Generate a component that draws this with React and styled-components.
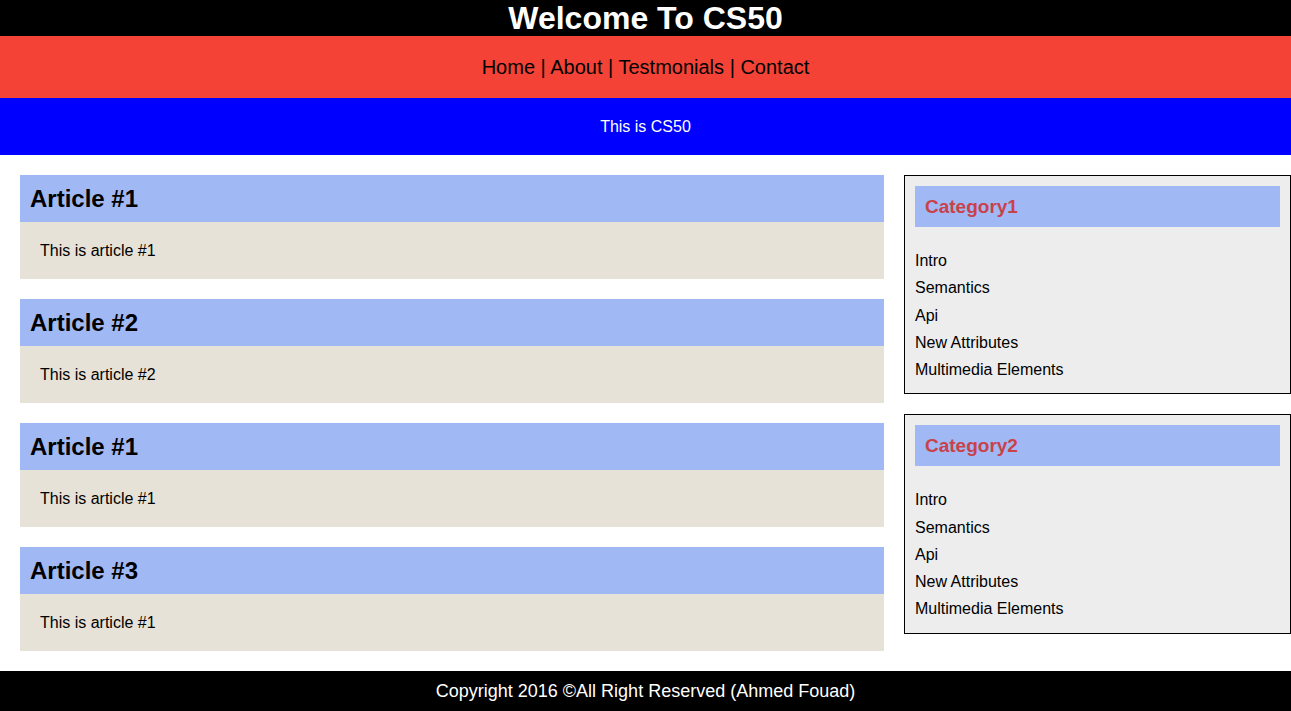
import React from "react";
import styled, { createGlobalStyle } from "styled-components";

const Global = createGlobalStyle`
  html, body { margin: 0; padding: 0; background: #fff; }
  body { font-family: "Liberation Sans", Arial, sans-serif; color: #000; }
`;

const Page = styled.div`
  display: flex;
  flex-direction: column;
  min-height: 711px;
`;

const TopBar = styled.header`
  background: #000;
  color: #fff;
  text-align: center;
`;

const Title = styled.h1`
  margin: 0;
  font-size: 32px;
  line-height: 36px;
  font-weight: bold;
`;

const Nav = styled.nav`
  background: #f44336;
  text-align: center;
  font-size: 20px;
  line-height: 22px;
  padding: 20px 0;
`;

const NavLink = styled.a`
  color: #000;
  text-decoration: none;
`;

const Banner = styled.div`
  background: #0000ff;
  color: #fff;
  text-align: center;
  font-size: 16px;
  line-height: 19px;
  padding: 19px 0;
`;

const Main = styled.main`
  flex: 1;
  display: grid;
  grid-template-columns: 1fr 387px;
  column-gap: 20px;
  align-items: start;
  padding: 20px 0 20px 20px;
`;

const Articles = styled.section`
  display: flex;
  flex-direction: column;
  gap: 20px;
`;

const Article = styled.article`
  display: flex;
  flex-direction: column;
`;

const ArticleHead = styled.h2`
  margin: 0;
  background: #a0b8f4;
  font-size: 24px;
  line-height: 27px;
  font-weight: bold;
  padding: 10px;
`;

const ArticleBody = styled.p`
  margin: 0;
  background: #e6e2d8;
  font-size: 16px;
  line-height: 17px;
  padding: 20px;
`;

const Aside = styled.aside`
  display: flex;
  flex-direction: column;
  gap: 20px;
`;

const CategoryBox = styled.div`
  border: 1px solid #000;
  background: #ededed;
  padding: 10px;
`;

const CategoryHead = styled.h3`
  margin: 0;
  background: #a0b8f4;
  color: #c9424a;
  font-size: 19px;
  line-height: 21px;
  font-weight: bold;
  padding: 10px;
`;

const List = styled.ul`
  list-style: none;
  margin: 20px 0 0;
  padding: 0;
`;

const Item = styled.li`
  font-size: 16px;
  line-height: 27.25px;
`;

const Footer = styled.footer`
  background: #000;
  color: #fff;
  text-align: center;
  font-size: 18px;
  line-height: 20px;
  padding: 10px 0;
`;

const articles = [
  { title: "Article #1", body: "This is article #1" },
  { title: "Article #2", body: "This is article #2" },
  { title: "Article #1", body: "This is article #1" },
  { title: "Article #3", body: "This is article #1" },
];

const topics = ["Intro", "Semantics", "Api", "New Attributes", "Multimedia Elements"];
const navItems = ["Home", "About", "Testmonials", "Contact"];

export default function App() {
  return (
    <>
      <Global />
      <Page>
        <TopBar>
          <Title>Welcome To CS50</Title>
        </TopBar>
        <Nav>
          {navItems.map((n, i) => (
            <React.Fragment key={n}>
              {i > 0 && " | "}
              <NavLink href="#">{n}</NavLink>
            </React.Fragment>
          ))}
        </Nav>
        <Banner>This is CS50</Banner>
        <Main>
          <Articles>
            {articles.map((a, i) => (
              <Article key={i}>
                <ArticleHead>{a.title}</ArticleHead>
                <ArticleBody>{a.body}</ArticleBody>
              </Article>
            ))}
          </Articles>
          <Aside>
            {["Category1", "Category2"].map((c) => (
              <CategoryBox key={c}>
                <CategoryHead>{c}</CategoryHead>
                <List>
                  {topics.map((t) => (
                    <Item key={t}>{t}</Item>
                  ))}
                </List>
              </CategoryBox>
            ))}
          </Aside>
        </Main>
        <Footer>Copyright 2016 ©All Right Reserved (Ahmed Fouad)</Footer>
      </Page>
    </>
  );
}
